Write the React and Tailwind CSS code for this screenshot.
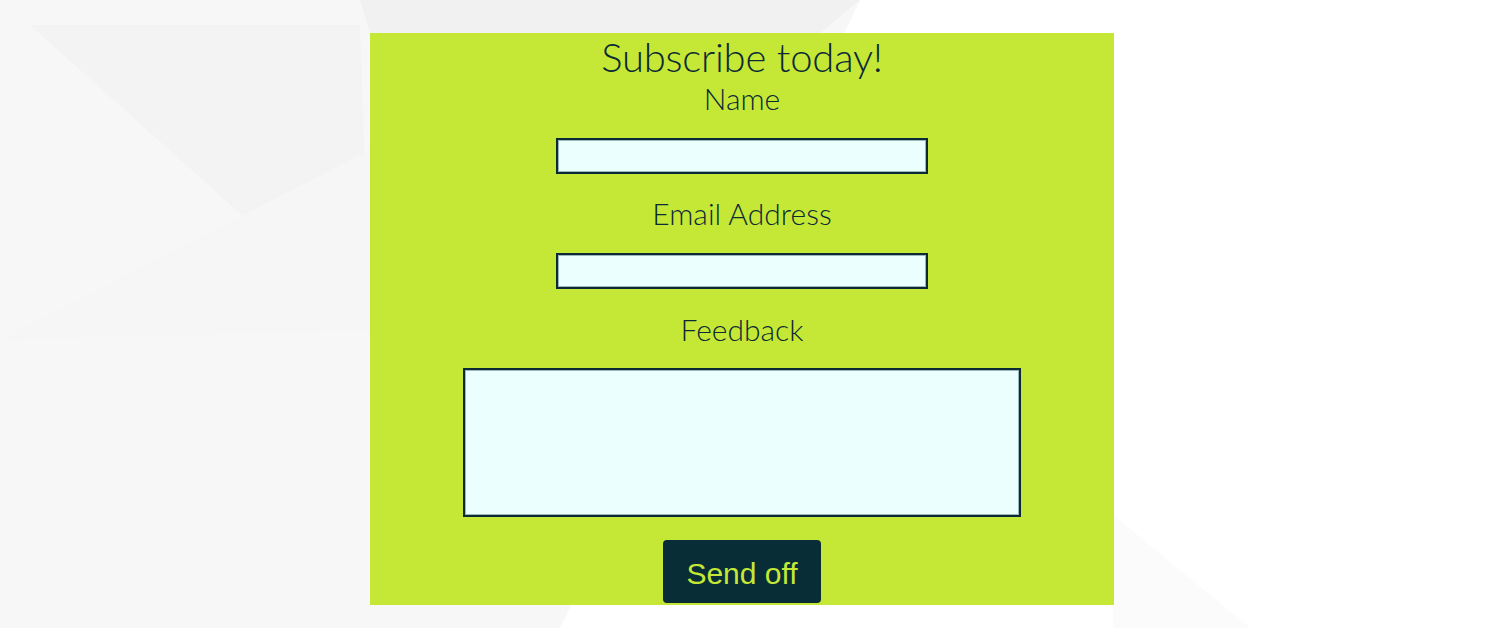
import React from 'react';

function Backdrop() {
  // faint diagonal panels behind the form
  return (
    <svg className="absolute inset-0 w-full h-full" viewBox="0 0 1485 628" preserveAspectRatio="none">
      <rect width="1485" height="628" fill="#ffffff" />
      <polygon points="0,0 860,0 560,628 0,628" fill="#f7f7f7" />
      <polygon points="30,25 360,25 370,330" fill="#f3f3f3" />
      <polygon points="360,0 860,0 820,33 370,33" fill="#f1f1f1" />
      <polygon points="0,340 370,150 370,330" fill="#f6f6f6" />
      <polygon points="1113,515 1250,628 1113,628" fill="#fbfbfb" />
    </svg>
  );
}

export default function App() {
  return (
    <div className="relative w-full h-[628px] overflow-hidden" style={{ fontFamily: 'Lato, "Open Sans", sans-serif' }}>
      <Backdrop />
      <form className="relative ml-[370px] mt-[33px] w-[744px] h-[572px] bg-[#c5e836] flex flex-col items-center text-[#0c2a35]">
        <h1 className="text-[40px] font-light leading-[48px] tracking-[-0.2px]">Subscribe today!</h1>
        <label className="text-[30px] font-light leading-[36px] -mt-[1px]">Name</label>
        <input type="text" className="mt-[22px] w-[372px] h-[36px] bg-[#ebffff] border-2 border-[#0c2a35] shadow-[inset_0_0_0_1px_#9db6bb] outline-none" />
        <label className="text-[30px] font-light leading-[36px] mt-[21px]">Email Address</label>
        <input type="email" className="mt-[22px] w-[372px] h-[36px] bg-[#ebffff] border-2 border-[#0c2a35] shadow-[inset_0_0_0_1px_#9db6bb] outline-none" />
        <label className="text-[30px] font-light leading-[36px] mt-[22px]">Feedback</label>
        <textarea className="mt-[21px] w-[558px] h-[149px] bg-[#ebffff] border-2 border-[#0c2a35] shadow-[inset_0_0_0_1px_#9db6bb] outline-none resize-none" />
        <button type="button" className="mt-[23px] w-[158px] h-[63px] pt-[4px] rounded-[4px] bg-[#082d36] text-[#c5e836] text-[30px] leading-none" style={{ fontFamily: '"Liberation Sans", Arial, sans-serif' }}>
          Send off
        </button>
      </form>
    </div>
  );
}
